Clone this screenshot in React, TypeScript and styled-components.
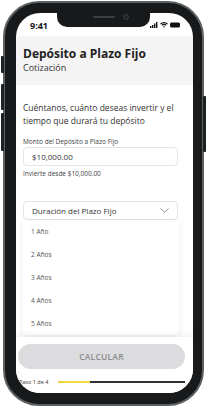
import styled, { createGlobalStyle } from "styled-components";

const Global = createGlobalStyle`
  html, body {
    margin: 0;
    padding: 0;
    background: #ffffff;
  }
  * {
    box-sizing: border-box;
  }
`;

const Stage = styled.div`
  width: 208px;
  height: 411px;
  padding: 1px 0 0 3px;
  font-family: "Open Sans", "Noto Sans", sans-serif;
`;

const Phone = styled.div`
  position: relative;
  width: 201px;
  height: 405px;
  border: 2px solid #5d6163;
  border-radius: 36px;
  background: #17191a;
  padding: 10px 9px 11px 11px;
`;

const SideButton = styled.div<{ $top: number; $height: number; $right?: boolean }>`
  position: absolute;
  top: ${(p) => p.$top}px;
  height: ${(p) => p.$height}px;
  width: 3px;
  background: #1e2122;
  ${(p) => (p.$right ? "right: -4px;" : "left: -4px;")}
  border-radius: 1px;
`;

const Screen = styled.div`
  position: relative;
  width: 100%;
  height: 100%;
  background: #ffffff;
  border-radius: 24px;
  overflow: hidden;
  display: flex;
  flex-direction: column;
`;

const Notch = styled.div`
  position: absolute;
  top: 0;
  left: 41px;
  width: 93px;
  height: 14px;
  background: #17191a;
  border-radius: 0 0 10px 10px;
  z-index: 5;
  display: flex;
  align-items: flex-start;
  justify-content: center;
  gap: 8px;
  padding: 2px 0 0 14px;
`;

const Speaker = styled.div`
  width: 22px;
  height: 2px;
  margin-top: 1px;
  border-radius: 1px;
  background: #3b3f41;
`;

const Camera = styled.div`
  width: 6px;
  height: 6px;
  margin-top: -1px;
  border-radius: 50%;
  border: 1px solid #3b3f41;
  background: #1f2223;
`;

const StatusBar = styled.div`
  height: 23px;
  flex-shrink: 0;
  display: flex;
  align-items: center;
  justify-content: space-between;
  padding: 0 12px 0 14px;
`;

const Clock = styled.span`
  font-size: 9px;
  font-weight: 700;
  color: #111;
  margin-top: 1px;
`;

const StatusIcons = styled.div`
  display: flex;
  align-items: center;
  gap: 2px;
`;

const Header = styled.div`
  height: 49px;
  flex-shrink: 0;
  background: #f4f4f4;
  padding: 10px 7px 0;
`;

const Title = styled.h1`
  margin: 0;
  font-size: 12px;
  line-height: 16px;
  font-weight: 700;
  color: #222;
`;

const Subtitle = styled.div`
  font-size: 9px;
  line-height: 12px;
  color: #333;
`;

const Content = styled.div`
  flex: 1;
  position: relative;
  padding: 16px 7px 0;
`;

const Intro = styled.p`
  margin: 0 0 10px;
  font-size: 8.5px;
  line-height: 13px;
  color: #333;
`;

const Label = styled.div`
  font-size: 6.5px;
  line-height: 9px;
  color: #444;
  margin-bottom: 1px;
`;

const Field = styled.div`
  height: 19px;
  width: 155px;
  border: 1px solid #e4e4e4;
  border-radius: 4px;
  display: flex;
  align-items: center;
  justify-content: space-between;
  padding: 0 8px;
  font-size: 8px;
  color: #333;
  background: #fff;
`;

const Helper = styled.div`
  font-size: 6.5px;
  line-height: 9px;
  color: #444;
  margin: 3px 0 23px;
`;

const SelectWrap = styled.div`
  position: relative;
  width: 155px;
`;

const Options = styled.ul`
  position: absolute;
  top: 19px;
  left: 0;
  width: 156px;
  margin: 0;
  padding: 0;
  list-style: none;
  background: #fff;
  box-shadow: 0 2px 6px rgba(0, 0, 0, 0.08);
  z-index: 2;
`;

const Option = styled.li`
  height: 23px;
  display: flex;
  align-items: center;
  padding: 0 8px;
  font-size: 6.5px;
  color: #555;
`;

const Ghost = styled.div`
  width: 155px;
  height: 19px;
  margin-top: 25px;
  border: 1px solid #e4e4e4;
  border-radius: 4px;
`;

const Footer = styled.div`
  flex-shrink: 0;
  position: relative;
  z-index: 3;
  background: #fff;
  box-shadow: 0 -3px 6px rgba(0, 0, 0, 0.05);
  padding: 6px 8px 0 2px;
  height: 56px;
`;

const Button = styled.button`
  width: 100%;
  height: 25px;
  border: none;
  border-radius: 13px;
  background: #dcdcde;
  color: #8b8b8d;
  font-family: inherit;
  font-size: 8.5px;
  font-weight: 600;
  letter-spacing: 0.2px;
`;

const Progress = styled.div`
  display: flex;
  align-items: center;
  gap: 10px;
  margin-top: 9px;
  padding-left: 1px;
`;

const StepText = styled.span`
  font-size: 5.5px;
  color: #333;
  white-space: nowrap;
`;

const Track = styled.div`
  flex: 1;
  height: 2px;
  background: #303233;
`;

const Fill = styled.div`
  height: 100%;
  background: #f2d83b;
`;

const options = ["1 Año", "2 Años", "3 Años", "4 Años", "5 Años"];

export default function App() {
  const step = 1;
  const steps = 4;
  return (
    <Stage>
      <Global />
      <Phone>
        <SideButton $top={53} $height={17} />
        <SideButton $top={81} $height={26} />
        <SideButton $top={110} $height={38} />
        <SideButton $top={93} $height={56} $right />
        <Screen>
          <Notch>
            <Speaker />
            <Camera />
          </Notch>
          <StatusBar>
            <Clock>9:41</Clock>
            <StatusIcons>
              <svg width="8" height="6" viewBox="0 0 8 6">
                <rect x="0" y="4" width="1.4" height="2" fill="#111" />
                <rect x="2" y="3" width="1.4" height="3" fill="#111" />
                <rect x="4" y="1.5" width="1.4" height="4.5" fill="#111" />
                <rect x="6" y="0" width="1.4" height="6" fill="#111" />
              </svg>
              <svg width="8" height="6" viewBox="0 0 8 6">
                <path d="M0.5 2 Q4 -0.8 7.5 2" stroke="#111" strokeWidth="1.1" fill="none" />
                <path d="M1.8 3.3 Q4 1.5 6.2 3.3" stroke="#111" strokeWidth="1.1" fill="none" />
                <path d="M3 4.6 L4 5.8 L5 4.6 Q4 3.8 3 4.6 Z" fill="#111" />
              </svg>
              <svg width="11" height="6" viewBox="0 0 11 6">
                <rect x="0" y="0.5" width="10" height="5" rx="1.5" fill="#111" />
              </svg>
            </StatusIcons>
          </StatusBar>
          <Header>
            <Title>Depósito a Plazo Fijo</Title>
            <Subtitle>Cotización</Subtitle>
          </Header>
          <Content>
            <Intro>
              Cuéntanos, cuánto deseas invertir y el tiempo que durará tu depósito
            </Intro>
            <Label>Monto del Depósito a Plazo Fijo</Label>
            <Field>$10,000.00</Field>
            <Helper>Invierte desde $10,000.00</Helper>
            <SelectWrap>
              <Field>
                Duración del Plazo Fijo
                <svg width="9" height="5" viewBox="0 0 9 5">
                  <path d="M0.5 0.5 L4.5 4.3 L8.5 0.5" stroke="#666" strokeWidth="0.7" fill="none" />
                </svg>
              </Field>
              <Options>
                {options.map((o) => (
                  <Option key={o}>{o}</Option>
                ))}
              </Options>
              <Ghost />
            </SelectWrap>
          </Content>
          <Footer>
            <Button>CALCULAR</Button>
            <Progress>
              <StepText>
                Paso {step} de {steps}
              </StepText>
              <Track>
                <Fill style={{ width: `${(step / steps) * 100}%` }} />
              </Track>
            </Progress>
          </Footer>
        </Screen>
      </Phone>
    </Stage>
  );
}
